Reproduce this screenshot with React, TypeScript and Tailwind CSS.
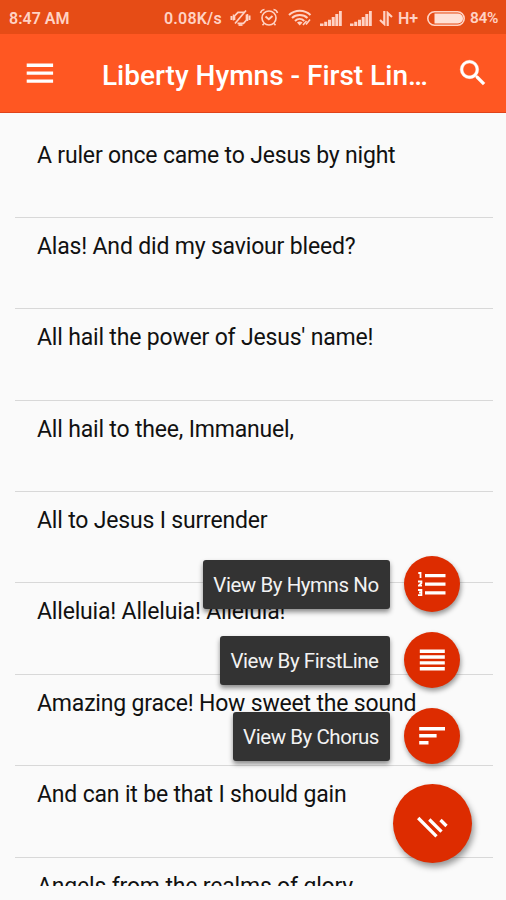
import React from "react";

const hymns = [
  "A ruler once came to Jesus by night",
  "Alas! And did my saviour bleed?",
  "All hail the power of Jesus' name!",
  "All hail to thee, Immanuel,",
  "All to Jesus I surrender",
  "Alleluia! Alleluia! Alleluia!",
  "Amazing grace! How sweet the sound",
  "And can it be that I should gain",
  "Angels from the realms of glory",
];

const SilentIcon = () => (
  <svg
    className="h-[20px] w-[22px] shrink-0"
    viewBox="0 0 22 20"
    fill="none"
    stroke="currentColor"
    strokeWidth="1.7"
  >
    <path d="M4.500 12V8L8 4.300h6M16.500 6.500v5.500L13.500 15.300H7.500" />
    <path d="M5 15.500 16 2.500" />
    <path d="M1.500 8v4M19.500 7.500v4.500" strokeWidth="2" />
    <path d="M3.500 6.500v6M17.500 6v7" strokeWidth="1.500" />
    <path d="M8.500 17h4" strokeWidth="1.800" />
  </svg>
);

const AlarmIcon = () => (
  <svg
    className="h-[20px] w-[20px] shrink-0"
    viewBox="0 0 20 20"
    fill="none"
    stroke="currentColor"
    strokeWidth="1.6"
  >
    <circle cx="10" cy="10" r="7" />
    <path d="M6.500 8.500l3.300 2.800L13.500 8" strokeWidth="1.900" />
    <path d="M1.500 5C2 3 3.500 1.700 5.500 1.500M18.500 5C18 3 16.500 1.700 14.500 1.500" />
    <path d="M5 15.500l-1.500 1.700M15 15.500l1.500 1.700" />
  </svg>
);

const WifiIcon = () => (
  <svg
    className="h-[18px] w-[24px] shrink-0"
    viewBox="0 0 24 18"
    fill="none"
    stroke="currentColor"
    strokeWidth="2"
  >
    <path d="M1 6C7 .2 16.500 .2 22.500 6" />
    <path d="M4 9c4-4 11.500-4 15.500 0" />
    <path d="M7 12c2.800-2.800 6.500-2.800 9.300 0" />
    <path d="M9 13.500c1.500-1.300 4-1.300 5.500 0l-2.800 3z" fill="currentColor" stroke="none" />
    <path d="M15 16l3.500-4M18 15.500l4-5" strokeWidth="1.600" />
  </svg>
);

const SignalIcon = () => (
  <svg className="h-[15px] w-[22px] shrink-0" viewBox="0 0 22 15" fill="currentColor">
    <path d="M0 12.500h3.500V15H0zM4.200 10.800h3V15h-3zM8 8.800h3V15H8zM11.700 6h3v9h-3zM15.300 3h3v12h-3zM19 0h2.800v15H19z" />
  </svg>
);

const DataIcon = () => (
  <svg
    className="h-[15px] w-[14px] shrink-0"
    viewBox="0 0 14 15"
    fill="none"
    stroke="currentColor"
    strokeWidth="2.2"
  >
    <path d="M5.300 0v13L1 9" />
    <path d="M8.700 15V2L13 6" />
  </svg>
);

const BatteryIcon = () => (
  <svg className="h-[15px] w-[38px] shrink-0" viewBox="0 0 38 15">
    <rect x=".8" y=".8" width="36.400" height="13.400" rx="6.700" fill="none" stroke="currentColor" strokeWidth="1.600" />
    <path d="M7.500 2.500h23.500a5 5 0 0 1 0 10H7.500z" fill="#ffe0d6" />
  </svg>
);

const NumberedIcon = () => (
  <svg className="mr-px h-7 w-7" viewBox="0 0 28 28" fill="white">
    <path d="M7 4h20.500v3.200H7zM7 12.600h20.500v3.200H7zM7 21.200h20.500v3.200H7z" />
    <path
      d="M.3 3H2.500V8M0 11.500h3.400v1.600L.8 15.600h3.200M0 20h3.400v5.200H0M1 22.500h2.400"
      fill="none"
      stroke="white"
      strokeWidth="1.8"
    />
  </svg>
);

const LinesIcon = () => (
  <svg className="h-[22px] w-[26px]" viewBox="0 0 26 22" fill="white">
    <path d="M.8 .5h25v3.400H.8zM.8 6.300h25v3.400H.8zM.8 12.200h25v3.400H.8zM.8 18h25v3.400H.8z" />
  </svg>
);

const SortIcon = () => (
  <svg className="h-[20px] w-[27px]" viewBox="0 0 27 20" fill="white">
    <path d="M.2 1H26v3.600H.2zM.2 8h17.400v3.600H.2zM.2 15h9.300v3.600H.2z" />
  </svg>
);

const actions = [
  { label: "View By Hymns No", width: "w-[187px]", icon: <NumberedIcon /> },
  { label: "View By FirstLine", width: "w-[170px]", icon: <LinesIcon /> },
  { label: "View By Chorus", width: "w-[157px]", icon: <SortIcon /> },
];

const StatusBar = () => (
  <div className="flex h-[34px] items-center bg-[#e64c16] pt-[2px] pl-[9px] text-[15.500px] font-semibold whitespace-nowrap text-[#ffd2c4]">
    <span className="w-[155px] pt-[2px] text-[16px]">8:47 AM</span>
    <span className="w-[66px] pt-[2px] text-[16px] tracking-[0.200px]">0.08K/s</span>
    <SilentIcon />
    <span className="w-[7px]" />
    <AlarmIcon />
    <span className="w-[9px]" />
    <WifiIcon />
    <span className="w-[8px]" />
    <SignalIcon />
    <span className="w-[8px]" />
    <SignalIcon />
    <span className="w-[7px]" />
    <DataIcon />
    <span className="w-[5px]" />
    <span className="w-[29px] pt-[2px] text-[16px]">H+</span>
    <BatteryIcon />
    <span className="ml-[5px] pt-[2px] tracking-[-0.300px]">84%</span>
  </div>
);

const Header = () => (
  <header className="flex h-[79px] items-center border-b border-[#e0431a] bg-[#ff5722] text-white">
    <button className="ml-[26px]" aria-label="Open menu">
      <svg className="h-[20px] w-[28px]" viewBox="0 0 28 20" fill="currentColor">
        <path d="M.7 .5h26.400v3.400H.7zM.7 8.500h26.400v3.200H.7zM.7 16.400h26.400v3.400H.7z" />
      </svg>
    </button>
    <h1 className="ml-[48px] w-[340px] pt-[5px] text-[28px] leading-[36px] font-medium whitespace-nowrap">
      Liberty Hymns - First Lin…
    </h1>
    <button className="ml-[14px]" aria-label="Search">
      <svg
        className="h-[34px] w-[34px]"
        viewBox="0 0 24 24"
        fill="currentColor"
        stroke="currentColor"
        strokeWidth="0.3"
      >
        <path d="M15.500 14h-.79l-.28-.27A6.471 6.471 0 0 0 16 9.500 6.500 6.500 0 1 0 9.500 16c1.610 0 3.090-.59 4.230-1.570l.27.28v.79l5 4.990L20.490 19l-4.990-5zm-6 0C7.010 14 5 11.990 5 9.500S7.010 5 9.500 5 14 7.010 14 9.500 11.990 14 9.500 14z" />
      </svg>
    </button>
  </header>
);

const ActionMenu = () => (
  <div className="absolute top-[556px] right-[34px] flex flex-col items-end">
    <div className="mr-[12px] flex flex-col items-end gap-[20px]">
      {actions.map((action) => (
        <div key={action.label} className="flex items-center gap-[14px]">
          <span
            className={`${action.width} flex h-[49px] items-center justify-center rounded-[3px] bg-[#333333] pt-[2px] pr-[1px] text-[20.500px] tracking-[-0.450px] whitespace-nowrap text-[#f2f2f2] shadow-[0_3px_5px_rgba(0,0,0,0.450)]`}
          >
            {action.label}
          </span>
          <button
            className="flex size-14 items-center justify-center rounded-full bg-[#dd2c00] shadow-[1px_3px_5px_rgba(0,0,0,0.400)]"
            aria-label={action.label}
          >
            {action.icon}
          </button>
        </div>
      ))}
    </div>
    <button
      className="mt-[20px] flex size-[79px] items-center justify-center rounded-full bg-[#dd2c00] shadow-[2px_4px_6px_rgba(0,0,0,0.400)]"
      aria-label="Close menu"
    >
      <svg className="mt-[8px] h-[24px] w-[32px]" viewBox="0 0 32 24" fill="none" stroke="white" strokeWidth="3.300">
        <path d="M1.200 2 19.500 20.300M12.300 3.500 24.500 15.700M23.500 4l6 6" />
      </svg>
    </button>
  </div>
);

const App = () => {
  return (
    <div className="relative h-[900px] w-[506px] overflow-hidden bg-[#fafafa] font-[Roboto,sans-serif]">
      <StatusBar />
      <Header />
      <ul className="h-[773px] overflow-hidden pt-[13.500px] pr-[13px] pl-[15px]">
        {hymns.map((hymn) => (
          <li
            key={hymn}
            className="h-[91.400px] border-b-[1.500px] border-[#d8d8d8] pt-[13px] pl-[22px] text-[23px] leading-[32px] tracking-[-0.180px] whitespace-nowrap text-[#111111] last:border-b-0"
          >
            {hymn}
          </li>
        ))}
      </ul>
      <ActionMenu />
    </div>
  );
};

export default App;
